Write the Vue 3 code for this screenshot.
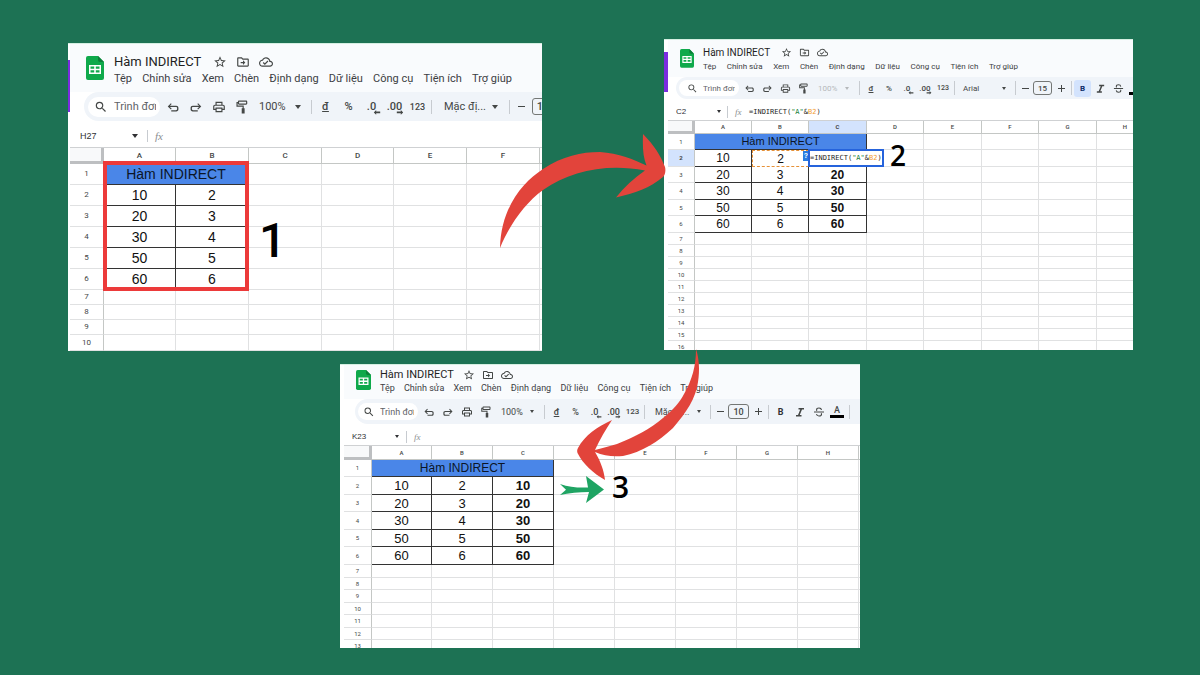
<script setup>
const menus = ['Tệp', 'Chỉnh sửa', 'Xem', 'Chèn', 'Định dạng', 'Dữ liệu', 'Công cụ', 'Tiện ích', 'Trợ giúp']
const pairs = [[10, 2], [20, 3], [30, 4], [50, 5], [60, 6]]

const icons = {
  star: 'M22 9.24l-7.19-.62L12 2 9.19 8.63 2 9.24l5.46 4.73L5.82 21 12 17.27 18.18 21l-1.63-7.03L22 9.24zM12 15.4l-3.76 2.27 1-4.28-3.32-2.88 4.38-.38L12 6.1l1.71 4.04 4.38.38-3.32 2.88 1 4.28L12 15.4z',
  folder: 'M20 6h-8l-2-2H4c-1.1 0-2 .9-2 2v12c0 1.1.9 2 2 2h16c1.1 0 2-.9 2-2V8c0-1.1-.9-2-2-2zm0 12H4V6h5.2l2 2H20v10zm-8-1l4-4-4-4v3H8v2h4z',
  cloud: 'M19.35 10.04C18.67 6.59 15.64 4 12 4 9.11 4 6.6 5.64 5.35 8.04 2.34 8.36 0 10.91 0 14c0 3.31 2.69 6 6 6h13c2.76 0 5-2.24 5-5 0-2.64-2.05-4.78-4.65-4.96zM19 18H6c-2.21 0-4-1.79-4-4 0-2.05 1.53-3.76 3.56-3.97l1.07-.11.5-.95C8.08 7.14 9.94 6 12 6c2.62 0 4.88 1.86 5.39 4.43l.3 1.5 1.53.11c1.56.1 2.78 1.41 2.78 2.96 0 1.65-1.35 3-3 3zm-9-3.82l-2.09-2.09L6.5 13.5 10 17l6.01-6.01-1.41-1.41z',
  search: 'M15.5 14h-.79l-.28-.27A6.471 6.471 0 0 0 16 9.5 6.5 6.5 0 1 0 9.5 16c1.61 0 3.09-.59 4.23-1.57l.27.28v.79l5 4.99L20.49 19l-4.99-5zm-6 0C7.01 14 5 11.99 5 9.5S7.01 5 9.5 5 14 7.01 14 9.5 11.99 14 9.5 14z',
  undo: 'M8.4 5.6L3 11l5.4 5.4 1.400-1.400-3-3H17c1.300 0 2 .7 2 2v1.500c0 1.300-.7 2-2 2H9v2.200h8.500c2.300 0 3.800-1.500 3.800-3.800V13.600c0-2.300-1.500-3.800-3.800-3.800H6.800l2.900-2.900z',
  redo: 'M15.600 5.600L21 11l-5.400 5.400-1.400-1.400 3-3H7c-1.300 0-2 .7-2 2v1.500c0 1.300.7 2 2 2h8v2.200H6.500c-2.300 0-3.800-1.500-3.800-3.800V13.600c0-2.300 1.500-3.800 3.800-3.800h10.700l-2.900-2.900z',
  print: 'M19 8h-1V3H6v5H5c-1.66 0-3 1.34-3 3v6h4v4h12v-4h4v-6c0-1.66-1.34-3-3-3zM8 5h8v3H8V5zm8 12v2H8v-4h8v2zm2-2v-2H6v2H4v-4c0-.55.45-1 1-1h14c.55 0 1 .45 1 1v4h-2z',
  paint: 'M7 1h12c1.100 0 2 .9 2 2v3c0 1.100-.9 2-2 2H7c-1.100 0-2-.9-2-2v-.500H4.500V9.500H15V14h1.500v9h-5v-9H13v-2.500H2.500V3.500H5V3c0-1.100.9-2 2-2zm0 2v3h12V3H7z',
}
const titleIcons = [['star', 'Gắn dấu sao'], ['folder', 'Di chuyển'], ['cloud', 'Trạng thái lưu']]
const editIcons = [['undo', 'Hoàn tác'], ['redo', 'Làm lại'], ['print', 'In'], ['paint', 'Sao chép định dạng']]

const panels = [
  {
    id: 'one', name: 'H27', font: 'Mặc đị...', size: '10', formula: false,
    cols: [34, 72, 73, 73, 72, 73, 73, 3], rows: [21, 21, 21, 21, 21, 21, 15, 15, 15, 16], dataCols: 2,
    full: false, strip: true, frame: true,
  },
  {
    id: 'two', name: 'C2', font: 'Arial', size: '15', formula: true,
    cols: [27, 57, 57, 58, 57, 58, 57, 58, 57], rows: [16, 17, 16, 17, 16, 17, 12, 12, 12, 12, 12, 12, 12, 12, 12, 12], dataCols: 3,
    full: true, strip: true, frame: false,
  },
  {
    id: 'three', name: 'K23', font: 'Mặc đị...', size: '10', formula: false,
    cols: [28, 60, 61, 61, 61, 61, 61, 61, 61, 3], rows: [17, 18, 17, 18, 17, 18, 13, 12, 13, 12, 13, 12, 13], dataCols: 3,
    full: true, strip: false, frame: false,
  },
]

const letter = (i, w) => (w < 10 ? '' : 'ABCDEFGH'[i])
const sum = (list) => list.reduce((a, b) => a + b, 0)

function cell(panel, r, c) {
  if (r < 1 || r > 5 || c >= panel.dataCols) return ''
  return c < 2 ? pairs[r - 1][c] : pairs[r - 1][0]
}
function visibleCols(panel, r) {
  const all = panel.cols.slice(1).map((_, i) => i)
  return r === 0 ? all.filter((i) => i === 0 || i >= panel.dataCols) : all
}
</script>

<template>
  <main class="stage">
    <section v-for="p in panels" :key="p.id" class="panel" :class="p.id" :aria-label="'Bảng tính ' + p.name">
      <span v-if="p.strip" class="strip"></span>
      <header class="head">
        <svg class="logo" viewBox="0 0 18 24" aria-hidden="true">
          <path d="M2 0h10l6 6v16a2 2 0 0 1-2 2H2a2 2 0 0 1-2-2V2a2 2 0 0 1 2-2z" fill="#0fa94b" />
          <path d="M12 0l6 6h-4a2 2 0 0 1-2-2z" fill="#0b8039" />
          <path d="M3 9h12v9H3zM4.500 10.500v2.200h3.700v-2.200zm5.300 0v2.200h3.700v-2.200zM4.500 14.300v2.200h3.700v-2.200zm5.300 0v2.200h3.700v-2.200z" fill="#fff" fill-rule="evenodd" />
        </svg>
        <div class="heading">
          <div class="title-row">
            <h2>Hàm INDIRECT</h2>
            <button v-for="i in titleIcons" :key="i[0]" class="tool" :aria-label="i[1]">
              <svg class="ico" viewBox="0 0 24 24"><path :d="icons[i[0]]" /></svg>
            </button>
          </div>
          <nav class="menu">
            <button v-for="m in menus" :key="m">{{ m }}</button>
          </nav>
        </div>
      </header>

      <div class="toolbar">
        <label class="search">
          <svg class="ico" viewBox="0 0 24 24" aria-hidden="true"><path :d="icons.search" /></svg>
          <input type="text" value="Trình đơn" aria-label="Tìm trong trình đơn" />
        </label>
        <button v-for="i in editIcons" :key="i[0]" class="tool" :aria-label="i[1]">
          <svg class="ico" viewBox="0 0 24 24"><path :d="icons[i[0]]" /></svg>
        </button>
        <button class="drop zoom"><span>100%</span><i class="caret"></i></button>
        <span class="sep"></span>
        <button class="tool currency">đ</button>
        <button class="tool">%</button>
        <button class="tool dec">.0<svg viewBox="0 0 10 6"><path d="M4 0L1 3l3 3V4h5V2H4z" /></svg></button>
        <button class="tool dec">.00<svg viewBox="0 0 10 6"><path d="M6 0l3 3-3 3V4H1V2h5z" /></svg></button>
        <button class="tool small">123</button>
        <span class="sep"></span>
        <button class="drop font"><span>{{ p.font }}</span><i class="caret"></i></button>
        <span class="sep"></span>
        <button class="step minus" aria-label="Giảm cỡ chữ"><i class="bar"></i></button>
        <input class="size" type="text" :value="p.size" aria-label="Cỡ chữ" />
        <template v-if="p.full">
          <button class="step" aria-label="Tăng cỡ chữ"><i class="bar plus"></i></button>
          <span class="sep"></span>
          <button class="tool bold" :class="{ on: p.formula }">B</button>
          <button class="tool" aria-label="In nghiêng">
            <svg class="ico" viewBox="0 0 24 24"><path d="M9 4h11v3h-4l-4.500 11H15v3H4v-3h4L12.500 7H9z" /></svg>
          </button>
          <button class="tool" aria-label="Gạch ngang">
            <svg class="ico" viewBox="0 0 24 24">
              <path d="M2 11h20v2H2z" />
              <path d="M17 8c-.3-2.400-2.200-4-5-4S7.200 5.500 7.200 7.600c0 .8.200 1.500.6 2M7 16c.3 2.500 2.200 4 5 4s5-1.500 5-3.700c0-.7-.2-1.300-.5-1.800" fill="none" stroke="currentColor" stroke-width="2.200" />
            </svg>
          </button>
          <button class="ink" aria-label="Màu văn bản"><template v-if="!p.formula">A</template></button>
          <span class="sep"></span>
        </template>
      </div>

      <div class="formula-bar">
        <input class="name" type="text" :value="p.name" aria-label="Hộp tên" />
        <i class="caret"></i>
        <span class="sep"></span>
        <em class="fx">fx</em>
        <code v-if="p.formula">=INDIRECT(<b class="str">"A"</b>&amp;<b class="ref">B2</b>)</code>
      </div>

      <div class="grid">
        <table :style="{ width: sum(p.cols) + 'px' }">
          <colgroup>
            <col v-for="(w, i) in p.cols" :key="i" :style="{ width: w + 'px' }" />
          </colgroup>
          <thead>
            <tr>
              <td class="corner"></td>
              <th v-for="(w, i) in p.cols.slice(1)" :key="i" scope="col" :class="{ picked: p.formula && i === 2 }">{{ letter(i, w) }}</th>
            </tr>
          </thead>
          <tbody>
            <tr v-for="(h, r) in p.rows" :key="r" :style="{ height: h + 'px' }">
              <th scope="row" :class="{ picked: p.formula && r === 1 }">{{ r + 1 }}</th>
              <td
                v-for="c in visibleCols(p, r)" :key="c"
                :colspan="r === 0 && c === 0 ? p.dataCols : 1"
                :class="{ filled: r < 6 && c < p.dataCols, banner: r === 0 && c === 0, strong: c === 2, source: p.formula && r === 1 && c === 1, active: p.formula && r === 1 && c === 2 }"
              >
                <template v-if="r === 0 && c === 0">Hàm INDIRECT</template>
                <template v-else-if="p.formula && r === 1 && c === 2">
                  <span class="hint">?</span>
                  <code class="editor">=INDIRECT(<b class="str">"A"</b>&amp;<b class="ref">B2</b>)</code>
                </template>
                <template v-else>{{ cell(p, r, c) }}</template>
              </td>
            </tr>
          </tbody>
        </table>
        <span v-if="p.frame" class="frame"></span>
      </div>
    </section>

    <svg class="arrows" viewBox="0 0 1200 675" aria-hidden="true">
      <g fill="#e2443b">
        <path d="M500 248C501 207 523 182 543 169C563 156 581 152 600 152C618 153 635 160 646.500 165.500C643 157 642.500 147 643 134C654 145 661 156 665 167C666 171 665 175 663 177C650 188 635 193 616 197.500C624 187 634 178 645 170.500C607 163 570 171 543 190C524 204 509 226 500 248Z" />
        <path d="M696 349C699 358 700 370 698 382C696 398 686 413 673 428C658 442 642 452 623 456C613 457 604 456 595 452C601 462 604 471 605 480C593 473 583 464 577.500 453C577 451 577 450 578 448C585 435 597 427 612 420C606 429 600 439 595 450C603 448 610 446 617 444C635 437 650 429 663 418C673 410 680 402 684 394C692 380 696 366 696 349Z" />
      </g>
      <path d="M560 484C569 487 578 488 588 487.500L586 476L604 489.500L586 503L589 492C579 492 569 493 560 495L566 489.700Z" fill="#1fa463" />
    </svg>
    <strong class="mark m1">1</strong>
    <strong class="mark m2">2</strong>
    <strong class="mark m3">3</strong>
  </main>
</template>

<style>
body { margin: 0; background: #1d7254; }
</style>

<style scoped>
.stage { position: relative; min-height: 100vh; overflow: hidden; background: #1d7254; font-family: Roboto, "Liberation Sans", sans-serif; color: #444746; }
.stage *, .stage *::before, .stage *::after { box-sizing: border-box; }
button, input { font: inherit; color: inherit; border: 0; padding: 0; margin: 0; background: none; min-width: 0; outline: 0; }
button { cursor: pointer; white-space: nowrap; }

.panel { position: absolute; overflow: hidden; background: #fff; padding-left: var(--edge); box-shadow: inset 0 1px #d5efe2; }
.one {
  left: 68px; top: 43px; width: 39.5%; max-height: 308px;
  --edge: 2px; --u: 23px; --txt: 11px; --title: 13px; --line: 16px; --head: 49px; --pad-top: 11px; --logo-top: 13px; --logo-w: 18px; --logo-x: 16px; --logo-gap: 10px;
  --menu: 398px; --tgap: 7px; --bar: 29px; --bar-x: 14px; --pill-w: 72px; --pill-h: 20px; --pill-x: 4px; --ico: 14px; --search-gap: 6px; --search-x: 6px;
  --zoom: 56px; --font: 73px; --font-x: 10px; --step: 18px; --size: 22px; --size-h: 17px; --fbar: 26px; --name-x: 10px; --name-w: 52px; --fx-gap: 9px; --colh: 17px; --banner: 14px; --data: 14px; --label: 8px; --caret: 3px;
}
.two {
  left: 664px; top: 39px; width: 39.05%; max-height: 311px;
  --edge: 4px; --u: 18px; --txt: 8px; --title: 10px; --line: 13px; --head: 38px; --pad-top: 7px; --logo-top: 10px; --logo-w: 14px; --logo-x: 12px; --logo-gap: 9px;
  --menu: 315px; --tgap: 7px; --bar: 22px; --bar-x: 8px; --pill-w: 60px; --pill-h: 16px; --pill-x: 3px; --ico: 11px; --search-gap: 5px; --search-x: 8px;
  --zoom: 45px; --font: 56px; --font-x: 6px; --step: 14px; --size: 19px; --size-h: 14px; --fbar: 21px; --name-x: 8px; --name-w: 41px; --fx-gap: 6px; --colh: 14px; --banner: 11px; --data: 12px; --label: 6px; --caret: 2px;
}
.three {
  left: 340px; top: 364px; width: 43.34%; max-height: 284px;
  --edge: 4px; --u: 19px; --txt: 9px; --title: 11px; --line: 13px; --head: 35px; --pad-top: 4px; --logo-top: 6px; --logo-w: 15px; --logo-x: 12px; --logo-gap: 9px;
  --menu: 333px; --tgap: 6px; --bar: 25px; --bar-x: 11px; --pill-w: 60px; --pill-h: 17px; --pill-x: 3px; --ico: 12px; --search-gap: 5px; --search-x: 5px;
  --zoom: 47px; --font: 61px; --font-x: 8px; --step: 14px; --size: 21px; --size-h: 15px; --fbar: 21px; --name-x: 8px; --name-w: 43px; --fx-gap: 7px; --colh: 15px; --banner: 12px; --data: 13px; --label: 6px; --caret: 2px;
}
.strip { position: absolute; left: 0; background: #7b2ce0; width: var(--edge); }
.one .strip { top: 17px; height: 52px; }
.two .strip { top: 13px; height: 40px; }

.head { display: flex; align-items: flex-start; height: var(--head); padding-left: var(--logo-x); background: #f9fbfd; box-shadow: inset 0 1px #d5efe2; }
.logo { flex: none; width: var(--logo-w); margin: var(--logo-top) var(--logo-gap) 0 0; }
.heading { padding-top: var(--pad-top); }
.title-row { display: flex; align-items: center; height: var(--line); }
h2 { margin: 0 var(--tgap) 0 0; font-size: var(--title); font-weight: 400; line-height: var(--line); color: #1f1f1f; white-space: nowrap; }
.menu { display: flex; justify-content: space-between; width: var(--menu); margin-top: 1px; font-size: var(--txt); line-height: var(--line); color: #3c4043; }
.ico { display: block; flex: none; width: var(--ico); height: var(--ico); fill: currentColor; }

.toolbar { display: flex; align-items: center; height: var(--bar); margin-left: var(--bar-x); padding-left: var(--pill-x); border-radius: var(--bar) 0 0 var(--bar); background: #f0f4f9; font-size: var(--txt); font-weight: 500; overflow: hidden; }
.toolbar > * { flex: none; }
.search { display: flex; align-items: center; gap: var(--search-gap); width: var(--pill-w); height: var(--pill-h); margin-right: 1px; padding: 0 4px 0 var(--search-x); border-radius: var(--pill-h); background: #fff; }
.search input { flex: 1; width: 0; font-weight: 400; color: #5f6368; }
.tool { display: flex; align-items: center; justify-content: center; width: var(--u); height: var(--size-h); }
.currency { text-decoration: underline; }
.small { font-size: calc(var(--txt) - 1px); }
.one .small { font-size: 9px; }
.dec { position: relative; }
.dec svg { position: absolute; right: 2px; bottom: 0; width: 6px; fill: currentColor; }
.one .dec svg { width: 8px; }
.drop { display: flex; align-items: center; justify-content: space-between; }
.zoom { width: var(--zoom); padding: 0 8px 0 6px; font-weight: 400; }
.two .zoom { color: #b5b8bb; }
.font { width: var(--font); padding: 0 9px 0 var(--font-x); font-weight: 400; }
.two .font, .three .font { padding-right: 7px; }
.caret { flex: none; width: 0; height: 0; border: var(--caret) solid transparent; border-top: calc(var(--caret) + 1px) solid currentColor; border-bottom: 0; }
.sep { flex: none; width: 1px; height: 14px; margin: 0 2px; background: #c7cbd0; }
.step { display: flex; align-items: center; justify-content: center; width: var(--step); height: var(--size-h); }
.step:not(.minus) { width: 16px; }
.bar { position: relative; width: 7px; height: 1px; background: currentColor; }
.plus::after { content: ""; position: absolute; left: 3px; top: -3px; width: 1px; height: 7px; background: currentColor; }
.size { width: var(--size); height: var(--size-h); margin: 0 1px; border: 1px solid #747775; border-radius: 3px; text-align: center; }
.one .size { margin-left: 2px; }
.bold { font-weight: 700; color: #303134; }
.on { width: 17px; height: 17px; border-radius: 3px; background: #d3e3fd; color: #0a2a66; }
.ink { width: 14px; height: 13px; margin: 0 3px 0 2px; border-bottom: 3px solid #000; line-height: 1; }

.formula-bar { display: flex; align-items: center; height: var(--fbar); padding: 4px 0 0 var(--name-x); font-size: var(--txt); color: #303134; }
.name { width: var(--name-w); font-family: "Liberation Sans", sans-serif; font-size: 8px; }
.one .name { font-size: 9px; }
.formula-bar .sep { height: 12px; margin: 0 7px 0 var(--fx-gap); }
.fx { width: 14px; font-family: "Liberation Serif", serif; color: #8a8d91; }
.two .fx, .three .fx { font-size: 9px; }
code { font: 7px "DejaVu Sans Mono", monospace; color: #1f1f1f; white-space: nowrap; }
code b { font-weight: 400; }
.str { color: #188038; }
.ref { color: #f29a2e; }

.grid { position: relative; border-top: 1px solid #cfd1d3; }
table { table-layout: fixed; border-collapse: separate; border-spacing: 0; }
td, th { padding: 0; line-height: 1; text-align: center; vertical-align: middle; border: solid #e0e1e2; border-width: 0 1px 1px 0; overflow: hidden; }
thead tr { height: calc(var(--colh) - 1px); }
thead th { font-size: var(--label); font-weight: 500; border-color: #c4c7c5; }
tbody th { font-size: var(--label); font-weight: 400; color: #444746; border-right-color: #c4c7c5; }
.corner { background: #f8f9fa; border: solid #bdbfc1; border-width: 0 3px 3px 0; }
.picked { background: #d3e3fd; font-weight: 700; }
tbody td { font-family: "Liberation Sans", sans-serif; font-size: var(--data); color: #111; }
tbody .filled { border-color: #333; }
tbody .banner { background: #4a86e8; color: #0b1526; font-size: var(--banner); }
.strong { font-weight: 700; }
tbody .source { border: 1px dashed #e69138; }
.active { position: relative; overflow: visible; }
.editor { position: absolute; left: -1px; top: -1px; z-index: 1; height: 18px; padding: 0; border: 2px solid #2563dc; background: #fff; line-height: 15px; font-weight: 400; }
.hint { position: absolute; left: -6px; top: 1px; width: 6px; height: 10px; background: #2a7de1; color: #fff; font-size: 7px; line-height: 10px; }
.frame { position: absolute; left: 33px; top: 13px; width: 146px; height: 130px; border: 4px solid #ec3a3a; }

.arrows { position: absolute; left: 0; top: 0; width: 100%; pointer-events: none; }
.mark { position: absolute; font-family: "Open Sans", sans-serif; font-weight: 600; line-height: 1; color: #000; }
.m1 { left: 259px; top: 217px; font-family: Roboto, sans-serif; font-size: 48px; font-weight: 500; }
.m2 { left: 890px; top: 141px; font-size: 28px; }
.m3 { left: 612px; top: 472px; font-size: 30px; }
</style>
